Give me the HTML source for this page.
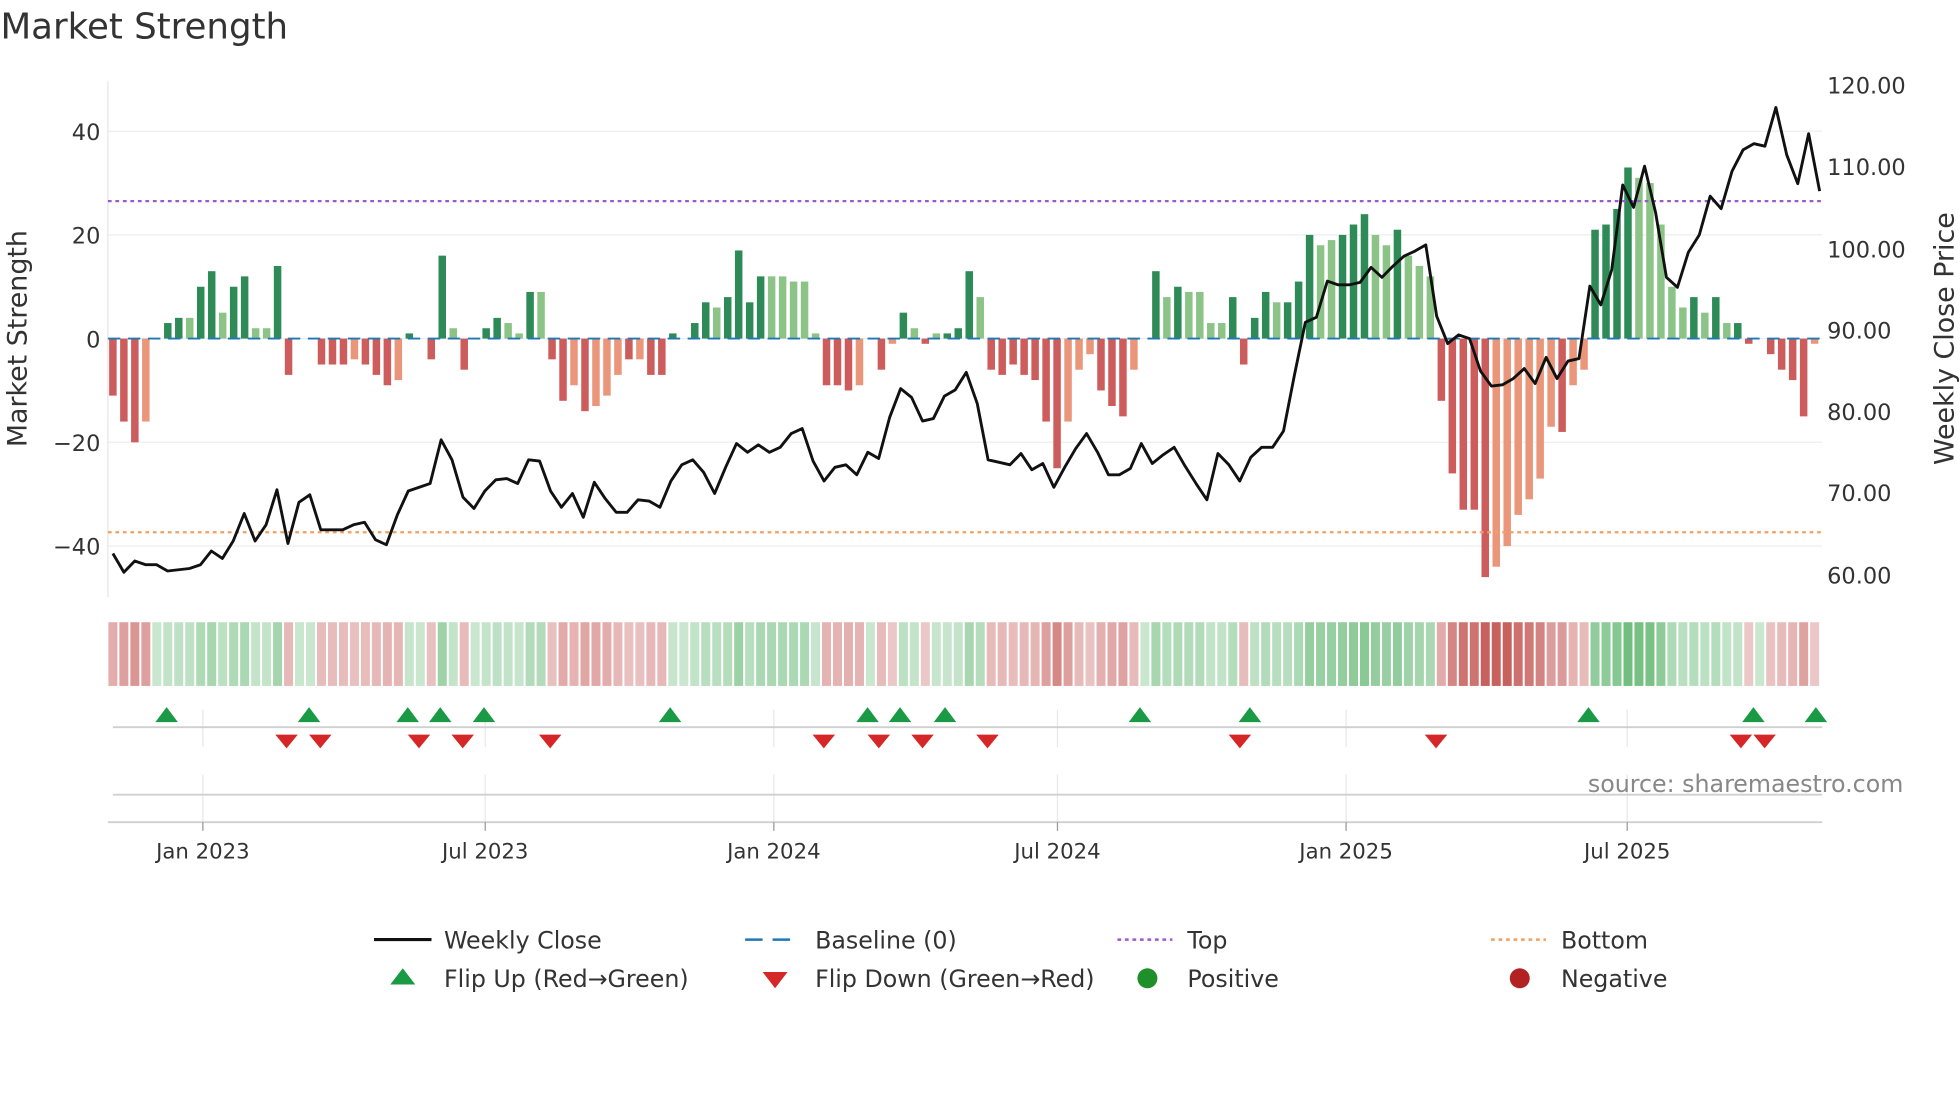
<!DOCTYPE html>
<html><head><meta charset="utf-8">
<style>
html,body{margin:0;padding:0;background:#fff;}
svg{display:block;font-family:"DejaVu Sans","Liberation Sans",sans-serif;}
</style></head>
<body>
<svg id="s" width="1960" height="1102" viewBox="0 0 1568 882" xmlns="http://www.w3.org/2000/svg">
<rect width="1568" height="882" fill="#fff"/>
<text x="0" y="31" font-size="28.5" fill="#333">Market Strength</text>
<g stroke="#eeeeee" stroke-width="1">
<line x1="86" y1="105" x2="1458" y2="105"/><line x1="86" y1="188" x2="1458" y2="188"/>
<line x1="86" y1="271" x2="1458" y2="271"/><line x1="86" y1="354" x2="1458" y2="354"/>
<line x1="86" y1="437" x2="1458" y2="437"/>
</g>
<line x1="86" y1="65" x2="86" y2="478" stroke="#e6e6e6"/>
<g font-size="18" fill="#333" text-anchor="end">
<text x="80" y="112">40</text><text x="80" y="195">20</text><text x="80" y="278">0</text>
<text x="80" y="361">−20</text><text x="80" y="444">−40</text>
</g>
<g font-size="18" fill="#333">
<text x="1462" y="75">120.00</text><text x="1462" y="140">110.00</text><text x="1462" y="206">100.00</text>
<text x="1462" y="271">90.00</text><text x="1462" y="336">80.00</text><text x="1462" y="401">70.00</text>
<text x="1462" y="467">60.00</text>
</g>
<text transform="translate(21,271) rotate(-90)" font-size="21.5" fill="#333" text-anchor="middle">Market Strength</text>
<text transform="translate(1563,271) rotate(-90)" font-size="21.5" fill="#333" text-anchor="middle">Weekly Close Price</text>
<g id="bars"></g>
<line x1="86" y1="271" x2="1458" y2="271" stroke="#1f77b4" stroke-width="1.5" stroke-dasharray="10,6"/>
<line x1="86" y1="161" x2="1458" y2="161" stroke="#9b59d0" stroke-width="1.8" stroke-dasharray="3,3"/>
<line x1="86" y1="426" x2="1458" y2="426" stroke="#f0a060" stroke-width="1.8" stroke-dasharray="3,3"/>
<polyline id="price" fill="none" stroke="#111" stroke-width="2.3" stroke-linejoin="round"/>
<g id="heat"></g>
<g stroke="#e8e8e8">
<line x1="162" y1="568" x2="162" y2="598"/><line x1="388" y1="568" x2="388" y2="598"/><line x1="619" y1="568" x2="619" y2="598"/>
<line x1="846" y1="568" x2="846" y2="598"/><line x1="1077" y1="568" x2="1077" y2="598"/><line x1="1302" y1="568" x2="1302" y2="598"/>
<line x1="162" y1="620" x2="162" y2="658"/><line x1="388" y1="620" x2="388" y2="658"/><line x1="619" y1="620" x2="619" y2="658"/>
<line x1="846" y1="620" x2="846" y2="658"/><line x1="1077" y1="620" x2="1077" y2="658"/><line x1="1302" y1="620" x2="1302" y2="658"/>
</g>
<line x1="90" y1="582" x2="1458" y2="582" stroke="#d0d0d0" stroke-width="1.5"/>
<line x1="90" y1="636" x2="1458" y2="636" stroke="#d0d0d0" stroke-width="1.5"/>
<line x1="86" y1="658" x2="1458" y2="658" stroke="#d0d0d0" stroke-width="1.5"/>
<g id="marks"></g>
<text x="1523" y="634" font-size="19" fill="#888" text-anchor="end">source: sharemaestro.com</text>
<g stroke="#999"><line x1="162" y1="658" x2="162" y2="665"/><line x1="388" y1="658" x2="388" y2="665"/><line x1="619" y1="658" x2="619" y2="665"/><line x1="846" y1="658" x2="846" y2="665"/><line x1="1077" y1="658" x2="1077" y2="665"/><line x1="1302" y1="658" x2="1302" y2="665"/></g>
<g font-size="17" fill="#333" text-anchor="middle">
<text x="162" y="687">Jan 2023</text><text x="388" y="687">Jul 2023</text><text x="619" y="687">Jan 2024</text>
<text x="846" y="687">Jul 2024</text><text x="1077" y="687">Jan 2025</text><text x="1302" y="687">Jul 2025</text>
</g>
<g font-size="19" fill="#333">
<line x1="299" y1="752" x2="345" y2="752" stroke="#111" stroke-width="2.5"/><text x="355" y="759">Weekly Close</text>
<line x1="596" y1="752" x2="640" y2="752" stroke="#1f77b4" stroke-width="2" stroke-dasharray="14,8"/><text x="652" y="759">Baseline (0)</text>
<line x1="894" y1="752" x2="938" y2="752" stroke="#9b59d0" stroke-width="2" stroke-dasharray="3,3"/><text x="950" y="759">Top</text>
<line x1="1193" y1="752" x2="1237" y2="752" stroke="#f0a060" stroke-width="2" stroke-dasharray="3,3"/><text x="1249" y="759">Bottom</text>
<polygon points="312,788 332,788 322,775" fill="#1a9a45"/><text x="355" y="790">Flip Up (Red→Green)</text>
<polygon points="610,778 630,778 620,791" fill="#d62728"/><text x="652" y="790">Flip Down (Green→Red)</text>
<circle cx="918" cy="783" r="8" fill="#1f8f2a"/><text x="950" y="790">Positive</text>
<circle cx="1216" cy="783" r="8" fill="#b22222"/><text x="1249" y="790">Negative</text>
</g>
</svg>
<script>
var B="-11,-16,-20,-16L,0,3,4,4L,10,13,5L,10,12,2L,2L,14,-7,0,0,-5,-5,-5,-4L,-5,-7,-9,-8L,1,0,-4,16,2L,-6,0,2,4,3L,1L,9,9L,-4,-12,-9L,-14,-13L,-11L,-7L,-4,-4L,-7,-7,1,0,3,7,6L,8,17,7,12,12L,12L,11L,11L,1L,-9,-9,-10,-9L,0,-6,-1L,5,2L,-1,1L,1,2,13,8L,-6,-7,-5,-7,-8,-16,-25,-16L,-6L,-3L,-10,-13,-15,-6L,0,13,8L,10,9L,9L,3L,3L,8,-5,4,9,7L,7,11,20,18L,19L,20,22,24,20L,18L,21,16L,14L,12L,-12,-26,-33,-33,-46,-44L,-40L,-34L,-31L,-27L,-17L,-18,-9L,-6L,21,22,25,33,31L,30L,22L,10L,6L,8,5L,8,3L,3,-1,0,-3,-6,-8,-15,-1L".split(",");
var P=[443,458,449,452,452,457,456,455,452,441,447,433,411,433,420,392,435,402,396,424,424,424,420,418,432,436,412,393,390,387,352,368,398,407,393,384,383,387,368,369,393,406,395,414,386,399,410,410,400,401,406,385,372,368,378,395,374,355,362,356,362,358,347,343,369,385,374,372,380,362,367,334,311,318,337,335,317,312,298,323,368,370,372,363,376,371,390,374,359,347,362,380,380,375,355,371,364,358,373,387,400,363,372,385,366,358,358,345,300,258,254,225,228,228,226,214,222,213,205,201,196,253,275,268,271,297,309,308,303,295,307,286,303,289,287,229,244,216,148,166,133,170,222,230,202,188,157,167,137,120,115,117,86,124,147,107,153];
var ns="http://www.w3.org/2000/svg",bars=document.getElementById("bars"),heat=document.getElementById("heat");
var n=B.length,dx=(1452-90)/(n-1);
function el(t,a,p){var e=document.createElementNS(ns,t);for(var k in a)e.setAttribute(k,a[k]);p.appendChild(e);return e;}
B.forEach(function(s,i){var L=s.indexOf("L")>=0,v=parseFloat(s),x=90+i*dx;
 var h=Math.abs(v)*4.15,c=v>=0?(L?"#8cc487":"#2e8b57"):(L?"#e9967a":"#cd5c5c");
 if(v!=0) el("rect",{x:x-3,y:v>0?271-h:271,width:6,height:h,fill:c},bars);
 var a=Math.min(Math.abs(v)/40,1),op=0.3+0.6*a;
 el("rect",{x:x-3.6,y:498,width:7.2,height:51,fill:v>=0?"#4cad5e":"#c0504d","fill-opacity":op},heat);
});
var pts=P.map(function(y,i){return (90+i*(1456-90)/(P.length-1)).toFixed(1)+","+y;}).join(" ");
document.getElementById("price").setAttribute("points",pts);
var m=document.getElementById("marks");
[133,247,326,352,387,536,694,720,756,912,1000,1271,1403,1453].forEach(function(x){el("polygon",{points:(x-9)+",578 "+(x+9)+",578 "+x+",566",fill:"#1a9a45"},m);});
[229,256,335,370,440,659,703,738,790,992,1149,1393,1412].forEach(function(x){el("polygon",{points:(x-9)+",588 "+(x+9)+",588 "+x+",599",fill:"#d62728"},m);});
</script>
</body></html>
